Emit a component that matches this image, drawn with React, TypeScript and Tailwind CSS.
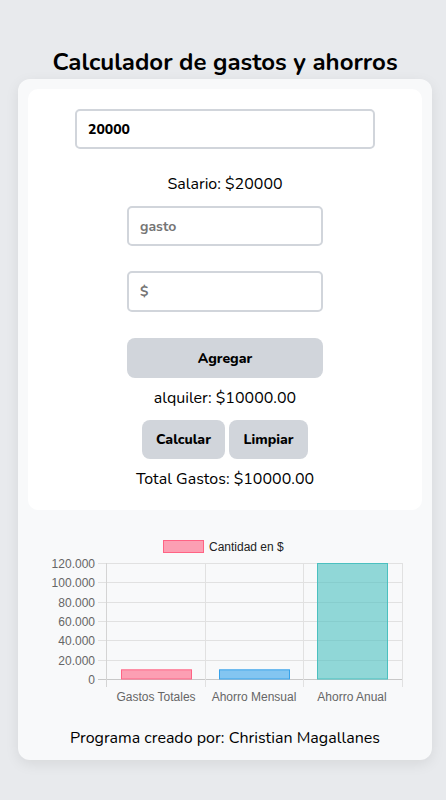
import React from 'react'

const font = { fontFamily: 'Nunito, Lato, "Open Sans", sans-serif' }

function Chart() {
  // chart drawn in local coords; svg starts at page x=28, y=510
  const left = 78
  const right = 374
  const top = 53
  const bottom = 169
  const step = (bottom - top) / 6
  const ticks = ['120.000', '100.000', '80.000', '60.000', '40.000', '20.000', '0']
  const cols = [78, 177, 275, 374]
  const bars = [
    { label: 'Gastos Totales', value: 10000, fill: 'rgba(255,99,132,0.6)', stroke: 'rgb(255,99,132)' },
    { label: 'Ahorro Mensual', value: 10000, fill: 'rgba(54,162,235,0.6)', stroke: 'rgb(54,162,235)' },
    { label: 'Ahorro Anual', value: 120000, fill: 'rgba(75,192,192,0.6)', stroke: 'rgb(75,192,192)' },
  ]
  return (
    <svg width="394" height="200" className="block" style={{ fontFamily: '"Liberation Sans", Arial, sans-serif' }}>
      <rect x="135.5" y="30.5" width="40" height="12" fill="rgba(255,99,132,0.6)" stroke="rgb(255,99,132)" />
      <text x="181" y="41" fontSize="12" fill="#222">Cantidad en $</text>
      {ticks.map((t, i) => {
        const y = Math.round(top + step * i) + 0.5
        return (
          <g key={t}>
            <line x1={left - 8} x2={right} y1={y} y2={y} stroke={i === 6 ? '#c8c8c8' : '#e1e1e1'} />
            <text x={left - 11} y={y + 4} fontSize="12" fill="#666" textAnchor="end">
              {t}
            </text>
          </g>
        )
      })}
      {cols.map((x, i) => (
        <line key={x} x1={x + 0.5} x2={x + 0.5} y1={top} y2={bottom + 8} stroke={i === 0 ? '#d4d4d4' : '#e1e1e1'} />
      ))}
      {bars.map((b, i) => {
        const h = (b.value / 120000) * (bottom - top)
        const x = 93 + i * 98
        return (
          <g key={b.label}>
            <rect x={x + 0.5} y={bottom - h + 0.5} width="70" height={h - 0.5} fill={b.fill} stroke={b.stroke} />
            <text x={x + 35} y={191} fontSize="12" fill="#666" textAnchor="middle">
              {b.label}
            </text>
          </g>
        )
      })}
    </svg>
  )
}

export default function App() {
  return (
    <main className="min-h-screen bg-[#e8eaed] flex flex-col items-center pt-[46px] pl-1" style={font}>
      <h1 className="text-[24px] leading-8 font-bold text-black mb-px">Calculador de gastos y ahorros</h1>
      <div className="w-[414px] bg-[#f8f9fa] rounded-xl p-[10px] shadow-[0_4px_14px_rgba(0,0,0,0.08)]">
        <div className="bg-white rounded-[10px] pt-5 pb-[19px] flex flex-col items-center">
          <input
            className="w-[300px] h-10 border-2 border-[#d1d5db] rounded-[5px] px-[11px] text-[14px] font-extrabold text-black outline-none"
            defaultValue="20000"
            style={font}
          />
          <p className="mt-[23px] text-[16px] leading-6 text-black">Salario: $20000</p>
          <input
            className="mt-[10px] w-[196px] h-10 border-2 border-[#d1d5db] rounded-[5px] px-[11px] text-[14px] font-bold placeholder:text-[#757575] outline-none"
            placeholder="gasto"
            style={font}
          />
          <input
            className="mt-[25px] w-[196px] h-[41px] border-2 border-[#d1d5db] rounded-[5px] px-[11px] text-[14px] font-bold placeholder:text-[#757575] outline-none"
            placeholder="$"
            style={font}
          />
          <button className="mt-[26px] w-[196px] h-10 bg-[#d1d5db] rounded-lg text-[14px] font-extrabold text-black">
            Agregar
          </button>
          <p className="mt-2 text-[16px] leading-6 text-black">alquiler: $10000.00</p>
          <div className="mt-[10px] flex gap-1">
            <button className="w-[83px] h-[39px] bg-[#d1d5db] rounded-lg text-[14px] font-extrabold text-black">Calcular</button>
            <button className="w-[79px] h-[39px] bg-[#d1d5db] rounded-lg text-[14px] font-extrabold text-black">Limpiar</button>
          </div>
          <p className="mt-2 text-[16px] leading-6 text-black">Total Gastos: $10000.00</p>
        </div>
        <Chart />
        <p className="mt-4 text-center text-[16px] leading-6 text-black">Programa creado por: Christian Magallanes</p>
      </div>
    </main>
  )
}
